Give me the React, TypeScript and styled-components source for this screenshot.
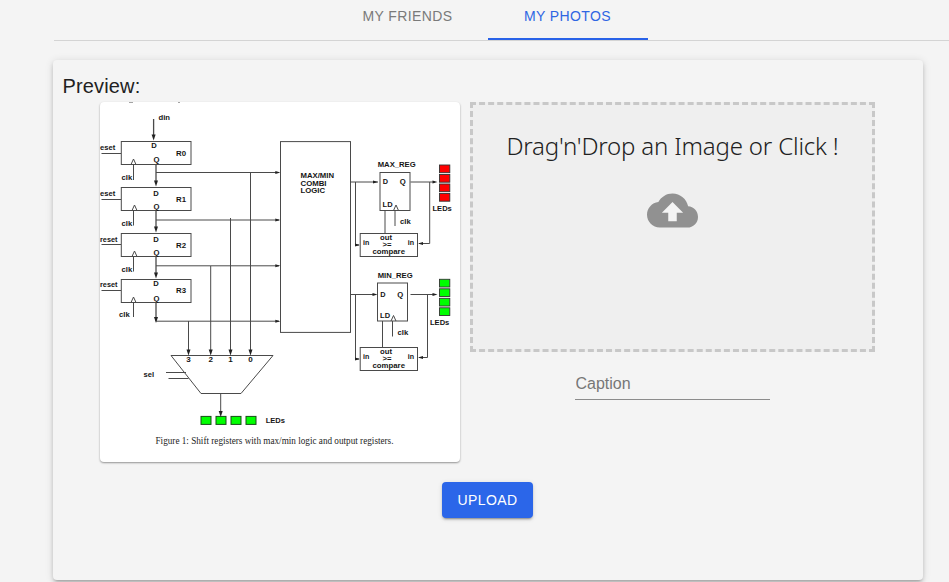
import React from "react";
import styled, { createGlobalStyle } from "styled-components";

const GlobalStyle = createGlobalStyle`
  * { box-sizing: border-box; }
  body {
    margin: 0;
    background: #f4f4f4;
    color: #212121;
    font-family: "Liberation Sans", Arial, sans-serif;
    overflow: hidden;
  }
`;

const Page = styled.main`
  height: 582px;
  padding-left: 53px;
  overflow: hidden;
`;

const TabBar = styled.nav`
  display: flex;
  height: 41px;
  margin-left: 1px;
  padding-left: 274px;
  border-bottom: 1px solid #d4d4d4;
`;

const Tab = styled.button<{ $active?: boolean }>`
  width: 160px;
  height: 40px;
  padding: 0 1px 7px 0;
  border: 0;
  border-bottom: 2px solid ${(p) => (p.$active ? "#2962e8" : "transparent")};
  background: none;
  color: ${(p) => (p.$active ? "#2f66e3" : "#7a7a7a")};
  font: 400 14px/20px "Liberation Sans", Arial, sans-serif;
  letter-spacing: 0.4px;
`;

const Card = styled.section`
  width: 870px;
  height: 520px;
  margin-top: 19px;
  padding: 11px 10px 0;
  border-radius: 4px;
  background: #f4f4f4;
  box-shadow: 0 3px 3px -2px rgba(0, 0, 0, 0.2), 0 3px 4px rgba(0, 0, 0, 0.14),
    0 1px 8px rgba(0, 0, 0, 0.12);
`;

const Heading = styled.h2`
  height: 31px;
  margin: 0 0 0 -0.5px;
  font: 400 20px/30px "Liberation Sans", Arial, sans-serif;
  letter-spacing: 0.15px;
`;

const Columns = styled.div`
  display: flex;
  gap: 10px;
  padding-left: 37px;
`;

const Preview = styled.figure`
  width: 360px;
  height: 360px;
  margin: 0;
  overflow: hidden;
  border-radius: 4px;
  background: #fff;
  box-shadow: 0 1px 2px rgba(0, 0, 0, 0.4);

  svg { display: block; }
`;

const UploadColumn = styled.div`
  display: flex;
  flex-direction: column;
  align-items: center;
  width: 405px;
`;

const DropZone = styled.div`
  display: flex;
  flex-direction: column;
  align-items: center;
  width: 405px;
  height: 250px;
  padding-top: 24px;
  border: 3px dashed #c8c8c8;
  background: #efefef;

  svg { margin-top: 22px; }
`;

const DropText = styled.p`
  margin: 0;
  font: 300 24px/34px "Noto Sans", sans-serif;
  letter-spacing: -0.17px;
  white-space: nowrap;
`;

const CaptionField = styled.input`
  width: 195px;
  height: 32px;
  margin: 16px 0 0 -1px;
  padding: 0 1px;
  border: 0;
  border-bottom: 1px solid #8c8c8c;
  background: transparent;
  font: 400 16px/20px "Liberation Sans", Arial, sans-serif;
  outline: none;

  &::placeholder { color: #777; opacity: 1; }
`;

const UploadButton = styled.button`
  display: block;
  width: 91px;
  height: 36px;
  margin: 20px 0 0 379px;
  padding: 0;
  border: 0;
  border-radius: 4px;
  background: #2b66e9;
  color: #fff;
  font: 400 14px/36px "Liberation Sans", Arial, sans-serif;
  letter-spacing: 0.4px;
  box-shadow: 0 3px 1px -2px rgba(0, 0, 0, 0.2), 0 2px 2px rgba(0, 0, 0, 0.14),
    0 1px 5px rgba(0, 0, 0, 0.12);
`;

const Diagram = styled.svg`
  fill: none;
  stroke: #4a4a4a;
  stroke-width: 1;
`;

const Label = styled.text`
  fill: #151515;
  stroke: none;
  font: bold 7px "Liberation Sans", Arial, sans-serif;
`;

const FigureTitle = styled.text`
  fill: #1c1c1c;
  stroke: none;
  font: 9.5px "Liberation Serif", "Times New Roman", serif;
`;

type LabelProps = { x: number; y: number; w: number; children: string };

const T = ({ x, y, w, children }: LabelProps) => (
  <Label x={x} y={y} textLength={w} lengthAdjust="spacingAndGlyphs">
    {children}
  </Label>
);

const down = (x: number, y: number) => `M${x} ${y}l-2-6h4z`;
const right = (x: number, y: number) => `M${x} ${y}l-5-1.5v3z`;
const left = (x: number, y: number) => `M${x} ${y}l5-1.5v3z`;

const registers = [
  { name: "R0", top: 141.5, d: 148, q: 161.5, label: 156, dx: 151.2, reset: "eset", resetY: 150, line: 153.5, clk: 180, clkX: 121.5, tick: 133.5, bus: 172.5 },
  { name: "R1", top: 187.5, d: 196, q: 209, label: 201.5, dx: 153.2, reset: "eset", resetY: 195.5, line: 199.5, clk: 225.5, clkX: 121.5, tick: 134.5, bus: 220 },
  { name: "R2", top: 233.5, d: 241.6, q: 255, label: 247.5, dx: 153.2, reset: "reset", resetY: 241.5, line: 244.5, clk: 271.5, clkX: 121.5, tick: 134.5, bus: 265.8 },
  { name: "R3", top: 279.5, d: 285.5, q: 300.5, label: 293, dx: 153.2, reset: "reset", resetY: 287, line: 290.5, clk: 317, clkX: 119, tick: 133.5, bus: 321.2 },
];

const taps = [
  { n: "3", x: 188.5, from: 321 },
  { n: "2", x: 210.7, from: 266 },
  { n: "1", x: 230.5, from: 218 },
  { n: "0", x: 250.5, from: 172.5 },
];

const outputs = [
  { name: "MAX_REG", nameW: 38, nameY: 167.3, x: 380, y: 172.5, bus: 182, back: 429.7, clkX: 400, cmp: 233.5, color: "#f00", led: 165, ledX: 432.5 },
  { name: "MIN_REG", nameW: 35, nameY: 278, x: 377.5, y: 283, bus: 294.5, back: 427.5, clkX: 397.5, cmp: 347.5, color: "#0f0", led: 279.3, ledX: 430 },
];

const CircuitDiagram = () => (
  <Diagram width="360" height="360" viewBox="100 102 360 360">
    <path d="M129 102.4h4M178 102.4h2" stroke="#999" />
    <T x={158.5} y={119.5} w={11.5}>din</T>
    <path d="M153.6 119V136" strokeWidth="1.3" />
    <path d={down(153.6, 140.5)} fill="#222" stroke="none" />

    {registers.map((r, i) => (
      <g key={r.name}>
        <rect x="121.3" y={r.top} width="69.7" height="23" />
        <path d={`M101.5 ${r.line}H121M${r.tick - 2.5} ${r.top + 23}l2.5-5.5 2.5 5.5M133.5 ${r.top + 23}V${r.clk}`} />
        <T x={100} y={r.resetY} w={r.reset === "eset" ? 15.2 : 17.4}>{r.reset}</T>
        <T x={r.dx} y={r.d} w={5.5}>D</T>
        <T x={153.5} y={r.q} w={6}>Q</T>
        <T x={176} y={r.label} w={10}>{r.name}</T>
        <T x={r.clkX} y={r.clk} w={10.7}>clk</T>
        <path d={`M156 ${r.top + 23}V${i === 3 ? r.bus : r.top + 41}`} strokeWidth="1.3" />
        <path d={down(156, i === 3 ? 323 : r.top + 45)} fill="#222" stroke="none" />
        <path d={`M156 ${r.bus}H279`} />
        <path d={right(280.3, r.bus)} fill="#222" stroke="none" />
      </g>
    ))}

    <rect x="280.5" y="141.6" width="70" height="190.8" />
    <T x={300.5} y={178} w={33.5}>MAX/MIN</T>
    <T x={300.5} y={185.6} w={26}>COMBI</T>
    <T x={300.5} y={193.1} w={24.5}>LOGIC</T>

    <path d="M171 355.5H273L241 393.5H201zM166 372.5H186M168.5 378.5H188.5M220.7 393.5V413" />
    {taps.map((t) => (
      <g key={t.n}>
        <path d={`M${t.x} ${t.from}V352`} />
        <path d={down(t.x, 355.5)} fill="#222" stroke="none" />
        <T x={t.x - 2.3} y={361.5} w={4.5}>{t.n}</T>
      </g>
    ))}
    <T x={143.5} y={376.5} w={10.5}>sel</T>
    {[201, 216, 231, 246].map((x) => (
      <rect key={x} x={x} y="416.4" width="10" height="8" fill="#0f0" stroke="#174c17" />
    ))}
    <path d={down(220.7, 417)} fill="#222" stroke="none" />
    <T x={265.7} y={422.7} w={19.3}>LEDs</T>

    {outputs.map((o) => (
      <g key={o.name}>
        <T x={377.7} y={o.nameY} w={o.nameW}>{o.name}</T>
        <rect x={o.x} y={o.y} width="30" height="38" />
        <T x={o.x + 2.8} y={o.bus + 2.1} w={5.3}>D</T>
        <T x={o.x + 19.8} y={o.bus + 2.1} w={6}>Q</T>
        <T x={o.x + 2.6} y={o.y + 34.5} w={10}>LD</T>
        <path d={`M${o.x + 13.5} ${o.y + 38}l2.5-5.5 2.5 5.5M${o.x + 15} ${o.y + 38}v15.5M${o.x + 5} ${o.y + 38}V${o.cmp}`} />
        <T x={o.clkX} y={o.y + 51.8} w={10.7}>clk</T>
        <path d={`M350.5 ${o.bus}H${o.x - 2}M355.5 ${o.bus}V${o.cmp + 11.5}H359M410.5 ${o.bus}H435M${o.back} ${o.bus}V${o.cmp + 10}H419`} />
        <path d={`${right(o.x - (o.x === 380 ? 2 : 0), o.bus)}${right(360, o.cmp + 11.5)}${right(437.5, o.bus)}${left(418, o.cmp + 10)}`} fill="#222" stroke="none" />
        <rect x="360.2" y={o.cmp} width="57.3" height="23" />
        <T x={380} y={o.cmp + 6.3} w={12}>out</T>
        <T x={363} y={o.cmp + 11.9} w={6.3}>in</T>
        <T x={382.5} y={o.cmp + 13.4} w={9}>{">="}</T>
        <T x={407.7} y={o.cmp + 11.9} w={6.3}>in</T>
        <T x={372.5} y={o.cmp + 20.5} w={32.5}>compare</T>
        {[0, 1, 2, 3].map((n) => (
          <rect key={n} x="439.5" y={o.led + n * 9.5} width="10.3" height="7.7" fill={o.color} stroke="#333" strokeWidth="0.9" />
        ))}
        <T x={o.ledX} y={o.led + 46} w={19.3}>LEDs</T>
      </g>
    ))}

    <FigureTitle x="155.5" y="443.5" textLength="238" lengthAdjust="spacingAndGlyphs">
      Figure 1: Shift registers with max/min logic and output registers.
    </FigureTitle>
  </Diagram>
);

const CloudUploadIcon = () => (
  <svg width="51" height="51" viewBox="0 0 24 24" fill="#919191">
    <path d="M19.35 10.04C18.67 6.59 15.64 4 12 4 9.11 4 6.6 5.64 5.35 8.04 2.34 8.36 0 10.91 0 14c0 3.31 2.69 6 6 6h13c2.76 0 5-2.24 5-5 0-2.64-2.05-4.78-4.65-4.96z" />
    <path fill="#f4f4f4" d="M14 13v4h-4v-4H7l5-5 5 5z" />
  </svg>
);

export default function App() {
  return (
    <>
      <GlobalStyle />
      <Page>
        <TabBar>
          <Tab>MY FRIENDS</Tab>
          <Tab $active>MY PHOTOS</Tab>
        </TabBar>
        <Card>
          <Heading>Preview:</Heading>
          <Columns>
            <Preview>
              <CircuitDiagram />
            </Preview>
            <UploadColumn>
              <DropZone>
                <DropText>Drag'n'Drop an Image or Click !</DropText>
                <CloudUploadIcon />
              </DropZone>
              <CaptionField placeholder="Caption" />
            </UploadColumn>
          </Columns>
          <UploadButton>UPLOAD</UploadButton>
        </Card>
      </Page>
    </>
  );
}
